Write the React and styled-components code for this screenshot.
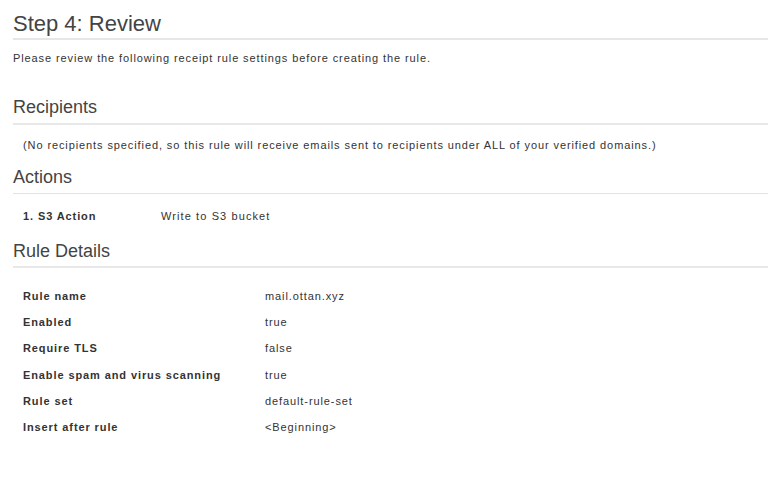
import React from 'react'
import styled, { createGlobalStyle } from 'styled-components'

const Global = createGlobalStyle`
  body {
    margin: 0;
    background: #fff;
    font-family: "Liberation Sans", Arial, sans-serif;
    color: #333;
  }
`

const Page = styled.div`
  padding: 11px 0 0 13px;
`

const Title = styled.h1`
  margin: 0;
  padding-bottom: 1px;
  font-size: 22px;
  line-height: 26px;
  font-weight: normal;
  color: #444;
  border-bottom: 2px solid #e6e6e6;
`

const Intro = styled.p`
  margin: 11px 0 0;
  font-size: 11px;
  line-height: 15px;
  letter-spacing: 0.9px;
`

const Heading = styled.h2`
  margin: ${p => p.$top}px 0 0;
  padding-bottom: ${p => p.$pad}px;
  font-size: 18px;
  line-height: 22px;
  font-weight: normal;
  color: #444;
  border-bottom: ${p => p.$thin ? '1px solid #e3e3e3' : '2px solid #e8e8e8'};
`

const Note = styled.p`
  margin: 13px 0 0 10px;
  font-size: 11px;
  line-height: 15px;
  letter-spacing: 0.9px;
`

const ActionRow = styled.div`
  display: grid;
  grid-template-columns: 138px 1fr;
  margin: 15px 0 0 10px;
  font-size: 11px;
  line-height: 15px;
  letter-spacing: 1.1px;
`

const Label = styled.span`
  font-weight: bold;
  color: #333;
  letter-spacing: 0.9px;
`

const DetailTable = styled.div`
  display: grid;
  grid-template-columns: 242px 1fr;
  grid-auto-rows: 26.2px;
  align-items: center;
  margin: 15px 0 0 10px;
  font-size: 11px;
  letter-spacing: 0.9px;
`

const details = [
  ['Rule name', 'mail.ottan.xyz'],
  ['Enabled', 'true'],
  ['Require TLS', 'false'],
  ['Enable spam and virus scanning', 'true'],
  ['Rule set', 'default-rule-set'],
  ['Insert after rule', '<Beginning>'],
]

const App = () => {
  return (
    <Page>
      <Global />
      <Title>Step 4: Review</Title>
      <Intro>Please review the following receipt rule settings before creating the rule.</Intro>

      <Heading $top={30} $pad={5}>Recipients</Heading>
      <Note>(No recipients specified, so this rule will receive emails sent to recipients under ALL of your verified domains.)</Note>

      <Heading $top={13} $pad={5} $thin>Actions</Heading>
      <ActionRow>
        <Label>1. S3 Action</Label>
        <span>Write to S3 bucket</span>
      </ActionRow>

      <Heading $top={16} $pad={4}>Rule Details</Heading>
      <DetailTable>
        {details.map(([name, value]) => (
          <React.Fragment key={name}>
            <Label>{name}</Label>
            <span>{value}</span>
          </React.Fragment>
        ))}
      </DetailTable>
    </Page>
  )
}

export default App
